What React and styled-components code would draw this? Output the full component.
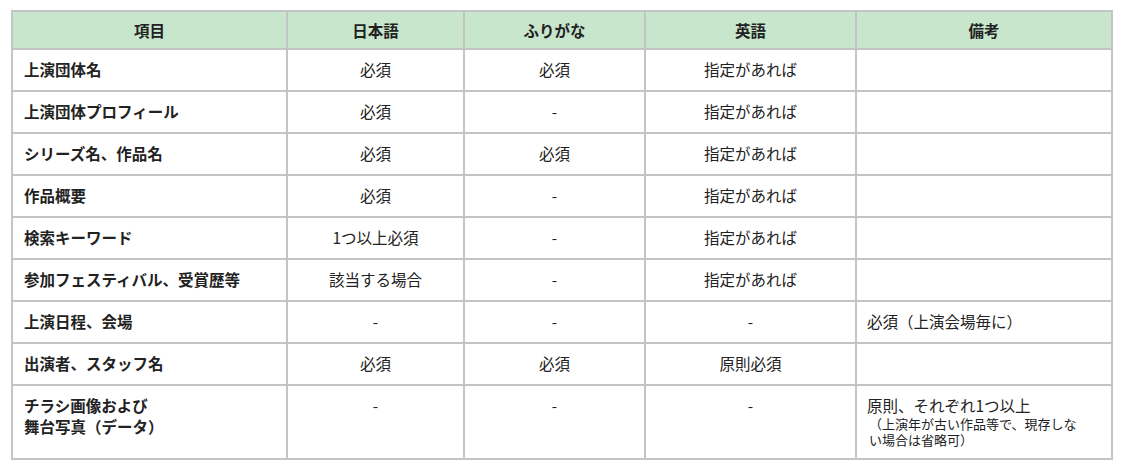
import React from 'react'
import styled, { createGlobalStyle } from 'styled-components'

const GlobalStyle = createGlobalStyle`
  body {
    margin: 0;
    padding: 10px 0 0 11px;
    background: #fff;
    font-family: "Noto Sans CJK JP", "Noto Sans", sans-serif;
    color: #222;
  }
`

const rows = [
    { item: '上演団体名', ja: '必須', kana: '必須', en: '指定があれば' },
    { item: '上演団体プロフィール', ja: '必須', kana: '-', en: '指定があれば' },
    { item: 'シリーズ名、作品名', ja: '必須', kana: '必須', en: '指定があれば' },
    { item: '作品概要', ja: '必須', kana: '-', en: '指定があれば' },
    { item: '検索キーワード', ja: '1つ以上必須', kana: '-', en: '指定があれば' },
    { item: '参加フェスティバル、受賞歴等', ja: '該当する場合', kana: '-', en: '指定があれば' },
    { item: '上演日程、会場', ja: '-', kana: '-', en: '-', note: '必須（上演会場毎に）' },
    { item: '出演者、スタッフ名', ja: '必須', kana: '必須', en: '原則必須' },
    {
        item: ['チラシ画像および', '舞台写真（データ）'],
        ja: '-', kana: '-', en: '-',
        note: '原則、それぞれ1つ以上',
        sub: '（上演年が古い作品等で、現存しない場合は省略可）',
        tall: true,
    },
]

const App = () => {
    return (
        <>
            <GlobalStyle />
            <Table>
                <colgroup>
                    <col style={{ width: 275 }} />
                    <col style={{ width: 177 }} />
                    <col style={{ width: 181 }} />
                    <col style={{ width: 211 }} />
                    <col style={{ width: 256 }} />
                </colgroup>
                <thead>
                    <tr>
                        <Th>項目</Th>
                        <Th>日本語</Th>
                        <Th>ふりがな</Th>
                        <Th>英語</Th>
                        <Th>備考</Th>
                    </tr>
                </thead>
                <tbody>
                    {rows.map((row, index) => (
                        <Row key={index} $tall={row.tall}>
                            <ItemCell>
                                {Array.isArray(row.item)
                                    ? row.item.map((line, i) => <div key={i}>{line}</div>)
                                    : row.item}
                            </ItemCell>
                            <Cell $center>{row.ja}</Cell>
                            <Cell $center>{row.kana}</Cell>
                            <Cell $center>{row.en}</Cell>
                            <Cell>
                                {row.note}
                                {row.sub && <SubNote>{row.sub}</SubNote>}
                            </Cell>
                        </Row>
                    ))}
                </tbody>
            </Table>
        </>
    )
}

const Table = styled.table`
    width: 1100px;
    table-layout: fixed;
    border-collapse: collapse;
    font-size: 15.5px;
    line-height: 21px;
`

const Th = styled.th`
    background: #c7e6cc;
    border: 2px solid #c4c4c4;
    height: 36px;
    padding: 0;
    font-weight: 700;
    text-align: center;
    vertical-align: middle;
`

const Row = styled.tr`
    td {
        vertical-align: ${props => props.$tall ? 'top' : 'middle'};
        height: ${props => props.$tall ? '51px' : '20px'};
    }
`

const Cell = styled.td`
    border: 2px solid #c4c4c4;
    padding: 9px 10px 10px;
    text-align: ${props => props.$center ? 'center' : 'left'};
`

const ItemCell = styled(Cell)`
    font-weight: 700;
    padding-left: 11px;
`

const SubNote = styled.div`
    max-width: 212px;
    font-size: 13px;
    line-height: 16px;
    padding-left: 2px;
`

export default App
